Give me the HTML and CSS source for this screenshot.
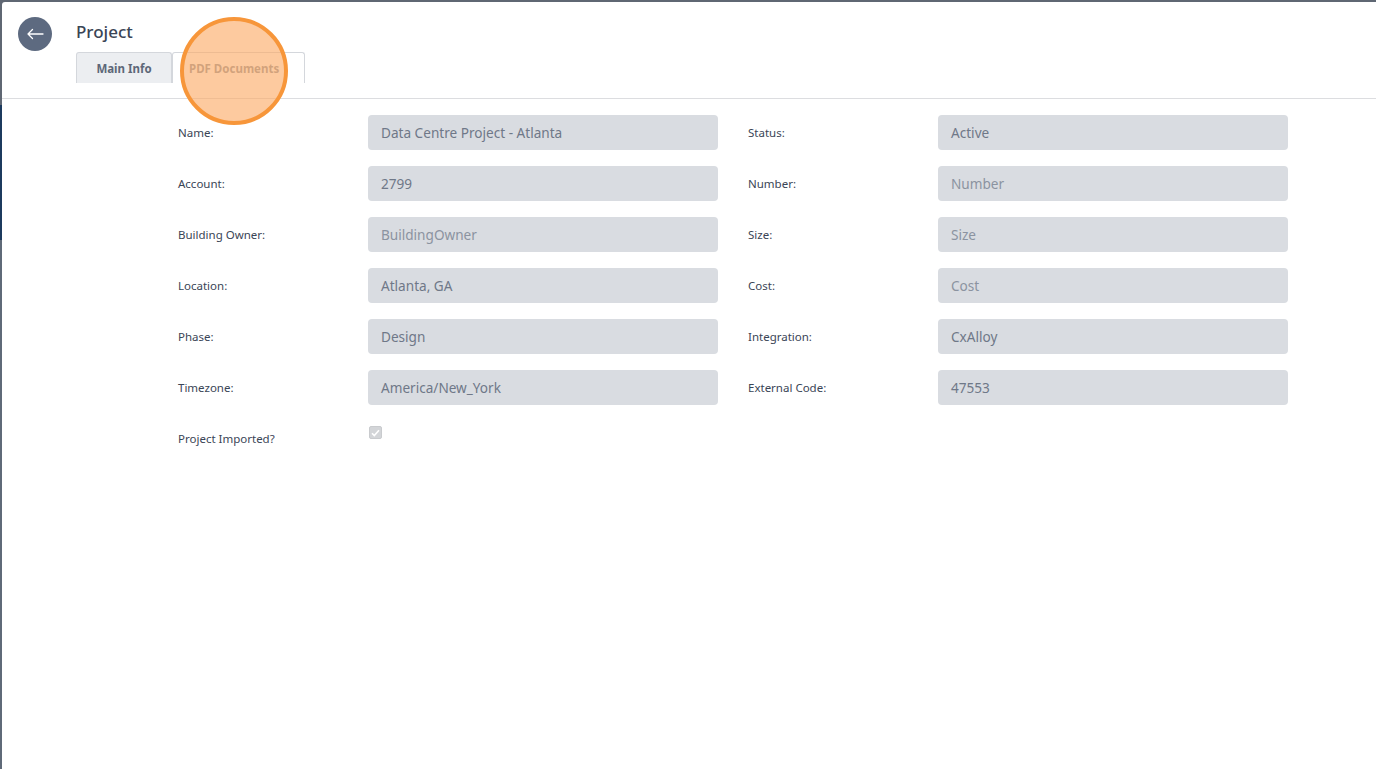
FILE: index.html
```html
<!DOCTYPE html>
<html>
<head>
<meta charset="utf-8">
<link rel="stylesheet" href="styles.css">
</head>
<body>
<div class="backdrop">
  <div class="modal">
    <header class="head">
      <button class="back" aria-label="Back">
        <svg width="18" height="12" viewBox="0 0 18 12"><path d="M17 6H2M6.5 1.5L2 6l4.5 4.5" fill="none" stroke="#fff" stroke-width="1.3" stroke-linecap="round" stroke-linejoin="round"/></svg>
      </button>
      <div class="titlewrap">
        <h1 class="title">Project</h1>
        <nav class="tabs">
          <span class="tab active">Main Info</span>
          <span class="tab pdf">PDF Documents</span>
        </nav>
      </div>
      <span class="click-marker"></span>
    </header>
    <main class="form">
      <label class="lbl">Name:</label><div class="inp">Data Centre Project - Atlanta</div>
      <label class="lbl">Status:</label><div class="inp">Active</div>
      <label class="lbl">Account:</label><div class="inp">2799</div>
      <label class="lbl">Number:</label><div class="inp ph">Number</div>
      <label class="lbl">Building Owner:</label><div class="inp ph">BuildingOwner</div>
      <label class="lbl">Size:</label><div class="inp ph">Size</div>
      <label class="lbl">Location:</label><div class="inp">Atlanta, GA</div>
      <label class="lbl">Cost:</label><div class="inp ph">Cost</div>
      <label class="lbl">Phase:</label><div class="inp">Design</div>
      <label class="lbl">Integration:</label><div class="inp">CxAlloy</div>
      <label class="lbl">Timezone:</label><div class="inp">America/New_York</div>
      <label class="lbl">External Code:</label><div class="inp">47553</div>
      <label class="lbl">Project Imported?</label>
      <div class="chkcell"><span class="chk"><svg width="9" height="8" viewBox="0 0 9 8"><path d="M1 4.2l2.3 2.3L8 1.2" fill="none" stroke="#fff" stroke-width="1.6"/></svg></span></div>
    </main>
  </div>
</div>
</body>
</html>
```
FILE: styles.css
```css
* { box-sizing: border-box; }
html, body { margin: 0; padding: 0; }
body {
  width: 1376px;
  height: 769px;
  overflow: hidden;
  font-family: "Noto Sans", "Open Sans", sans-serif;
  color: #3a4556;
}
.backdrop {
  width: 1376px;
  height: 769px;
  padding: 2px 0 0 2px;
  background: linear-gradient(to bottom, #5f6773 0, #5f6773 105px, #1c3a5e 105px, #1c3a5e 240px, #5f6a78 240px);
}
.modal {
  background: #fff;
  height: 767px;
  border-top-left-radius: 3px;
}
.head {
  position: relative;
  display: flex;
  align-items: flex-start;
  padding: 15px 0 0 16px;
  height: 97px;
  border-bottom: 1px solid #dcdde0;
}
.back {
  width: 34px;
  height: 34px;
  border-radius: 50%;
  border: none;
  background: #5d6a80;
  display: flex;
  align-items: center;
  justify-content: center;
  padding: 0;
  margin-right: 24px;
}
.titlewrap { display: flex; flex-direction: column; }
.title {
  margin: 3px 0 0 0;
  font-size: 17px;
  font-weight: 500;
  line-height: 24px;
  color: #3a4556;
}
.tabs { display: flex; margin-top: 8px; }
.tab {
  height: 31px;
  display: flex;
  align-items: center;
  border: 1px solid #d4d7dc;
  border-bottom: none;
  border-radius: 3px 3px 0 0;
  font-size: 11.5px;
  font-weight: 700;
  color: #8d96a3;
  padding: 0 16px;
  background: #fff;
}
.tab.active {
  width: 96px;
  justify-content: center;
  background: #eceef1;
  color: #5d6778;
}
.tab.pdf { width: 133px; }
.click-marker {
  position: absolute;
  left: 178px;
  top: 15px;
  width: 108px;
  height: 108px;
  border-radius: 50%;
  border: 4px solid #f7963a;
  background: rgba(252, 170, 100, 0.62);
}
.form {
  display: grid;
  grid-template-columns: 190px 350px 30px 190px 350px;
  grid-auto-rows: 35px;
  row-gap: 16px;
  margin: 16px 0 0 176px;
  width: 1110px;
}
.lbl {
  display: flex;
  align-items: center;
  font-size: 11.5px;
  color: #3a4556;
}
.lbl:nth-child(4n+3) { grid-column: 4; }
.inp {
  background: #d9dce1;
  border-radius: 4px;
  display: flex;
  align-items: center;
  padding-left: 13px;
  font-size: 13.6px;
  color: #6f7888;
}
.inp.ph { color: #8b93a0; }
.chkcell { padding: 5px 0 0 1px; }
.chk {
  display: flex;
  align-items: center;
  justify-content: center;
  width: 13px;
  height: 13px;
  border-radius: 2px;
  background: #d3d5d8;
  border: 1px solid #c9cbce;
}
```
